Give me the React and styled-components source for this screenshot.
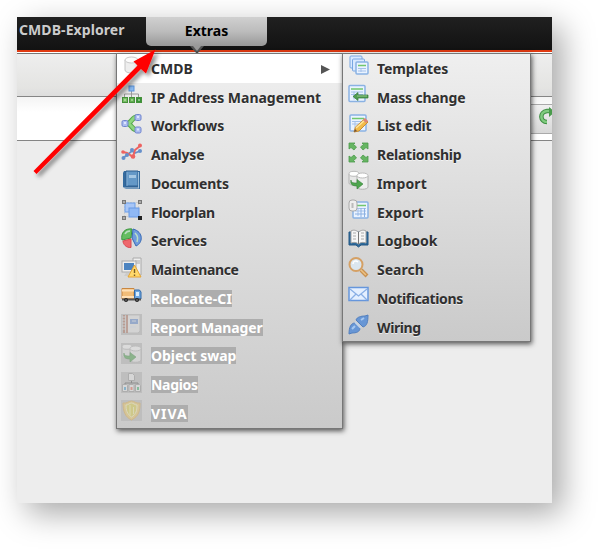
import React from "react";
import styled, { createGlobalStyle, css } from "styled-components";

const Global = createGlobalStyle`
  body { margin: 0; background: #fff; overflow: hidden; }
  * { box-sizing: border-box; }
`;

const Page = styled.div`
  width: 600px;
  height: 551px;
  padding: 17px;
  position: relative;
  font-family: "Noto Sans", "Open Sans", sans-serif;
  font-weight: 700;
  font-size: 14px;
  color: #303030;
`;

const AppFrame = styled.div`
  width: 535px;
  height: 486px;
  background: #ededed;
  box-shadow: 10px 10px 30px rgba(0, 0, 0, 0.35);
  display: flex;
  flex-direction: column;
`;

const NavBar = styled.nav`
  height: 35px;
  flex: none;
  display: flex;
  background: linear-gradient(#202020, #121212);
  border-bottom: 2px solid #e03a12;
`;

const NavItem = styled.div`
  width: 129px;
  padding-left: 2px;
  line-height: 26px;
  letter-spacing: 0.08px;
  color: #ccc;
`;

const ActiveTab = styled.div`
  position: relative;
  width: 121px;
  height: 29px;
  border-radius: 0 0 5px 5px;
  background: linear-gradient(#d0d0d0, #bcbcbc 50%, #989898);
  color: #000;
  text-align: center;
  line-height: 28px;
`;

const TabPointer = styled.svg`
  position: absolute;
  left: 44px;
  top: 29px;
  width: 14px;
  height: 8px;
`;

const ToolBar = styled.div`
  height: 44px;
  flex: none;
  margin-top: 1px;
  border-top: 1px solid #777;
  border-bottom: 1px solid #858585;
  background: linear-gradient(#eee, #e4e4e2 80%, #ddd);
  box-shadow: 0 -1px 0 #fff;
`;

const FilterBar = styled.div`
  height: 44px;
  flex: none;
  display: flex;
  justify-content: flex-end;
  padding: 7px 0 6px;
  border-bottom: 1px solid #858585;
  background: linear-gradient(#f4f4f4, #fff 35%);
`;

const RefreshBox = styled.div`
  width: 25px;
  padding: 2px 0 0 12px;
  overflow: hidden;
  border-top: 1px solid #aaa;
  border-bottom: 1px solid #aaa;
  background: linear-gradient(#f0f0f0, #d8d8d8);
`;

const Menu = styled.ul`
  position: absolute;
  top: 53px;
  left: ${(p) => (p.$sub ? 342 : 116)}px;
  width: ${(p) => (p.$sub ? 189 : 227)}px;
  height: ${(p) => (p.$sub ? 289 : 376)}px;
  margin: 0;
  padding: 0;
  list-style: none;
  border: 1px solid #777;
  background: linear-gradient(#efefef, #cacaca);
  box-shadow: 1px 2px 5px rgba(0, 0, 0, 0.65);
`;

const MenuRow = styled.li`
  height: 28.75px;
  display: flex;
  align-items: center;
  padding-left: ${(p) => (p.$sub ? 5 : 4)}px;
  background: ${(p) => (p.$selected ? "#fff" : "transparent")};
`;

const IconCell = styled.span`
  width: 21px;
  height: 21px;
  flex: none;
  margin: 0 ${(p) => (p.$sub ? 8 : 9)}px 5px 0;
  ${(p) =>
    p.$faded &&
    css`
      background: #bebebe;
    `}
  svg {
    display: block;
    width: 21px;
    height: 21px;
    opacity: ${(p) => (p.$faded ? 0.45 : 1)};
  }
`;

const Label = styled.span`
  height: 17px;
  line-height: 17px;
  white-space: nowrap;
  letter-spacing: ${(p) => p.$track}px;
  text-shadow: 0 1px 0 rgba(255, 255, 255, 0.65);
  ${(p) =>
    p.$disabled &&
    css`
      color: #fff;
      background: #adadad;
      text-shadow: none;
    `}
`;

const SubmenuArrow = styled.svg`
  width: 9px;
  height: 9px;
  margin: 3px 12px 0 auto;
`;

const Pointer = styled.svg`
  position: absolute;
  left: 25px;
  top: 40px;
  width: 145px;
  height: 145px;
`;

const drum = (
  <>
    <path d="M4 5v10c0 4 13 4 13 0V5" fill="#eee" stroke="#c4c4c4" />
    <ellipse cx="10.5" cy="5" rx="6.5" ry="3" fill="#fcfcfc" stroke="#cacaca" />
  </>
);

const sheet = (x, y, w, h) => (
  <>
    <rect x={x} y={y} width={w} height={h} rx="1" fill="#eaf3ff" stroke="#8bb2e3" strokeWidth="1.5" />
    <path d={`M${x + 2} ${y + 3.5}h${w - 4}`} stroke="#72c76c" strokeWidth="1.5" />
    <path
      d={`M${x + 2} ${y + 6.5}h${w - 4}M${x + 2} ${y + 9}h${w - 4}M${x + 5} ${y + 6}v${h - 8}`}
      stroke="#a4c1ea"
    />
  </>
);

const drums = (
  <>
    <path d="M1 4v9c0 3 10 3 10 0V4" fill="#e8e8e8" stroke="#b2b2b2" />
    <ellipse cx="6" cy="3.8" rx="5" ry="2.5" fill="#fff" stroke="#bbb" />
    <path d="M9 6v11c0 3 11 3 11 0V6" fill="#eee" stroke="#b2b2b2" />
    <ellipse cx="14.5" cy="5.5" rx="5.5" ry="2.5" fill="#fff" stroke="#bbb" />
    <path d="M3 10c0 3 3 3 6 3V9.500l6 4.500-6 5V16c-5 0-7-2-6-6z" fill="#4fa64f" stroke="#377f3a" strokeWidth=".6" />
  </>
);

const icons = {
  cmdb: drum,
  network: (
    <>
      <path d="M10.5 6v4M3.5 13v-3h14v3M10.5 10v3" fill="none" stroke="#999" />
      <rect x="8" y="2" width="5" height="5" fill="#8cbcf3" stroke="#5b93db" />
      <g stroke="#46913b">
        <rect x="1.5" y="13.5" width="5" height="5" fill="#77bd64" />
        <rect x="8.5" y="13.5" width="5" height="5" fill="#60ad50" />
        <rect x="15.5" y="13.5" width="5" height="5" fill="#389238" />
      </g>
      <path d="M3 16h2M10 16h2M17 16h2" stroke="#d3f2c5" />
    </>
  ),
  workflow: (
    <>
      <path d="M16 4C11 4 12 8 7 10.5 12 13 11 17 16 17" fill="none" stroke="#59a84f" strokeWidth="5" />
      <path d="M16 4C11 4 12 8 7 10.5 12 13 11 17 16 17" fill="none" stroke="#8dd77e" strokeWidth="3" />
      <g fill="#aebef0" stroke="#6f84cf">
        <rect x="1" y="7.5" width="6" height="6" rx="1.5" />
        <rect x="14" y="1.5" width="6" height="6" rx="1.5" />
        <rect x="14" y="14" width="6" height="6" rx="1.5" />
      </g>
      <path d="M3 10h2M16 4h2M16 16.5h2" stroke="#dce5ff" strokeWidth="2" />
    </>
  ),
  analyse: (
    <>
      <path d="M2 16 6 13l5-4 3 2 5-2" fill="none" stroke="#668fca" strokeWidth="1.7" />
      <path d="M2 10l4 1 6 4 2-7 5-4" fill="none" stroke="#ed6260" strokeWidth="2" />
      <g fill="#668fca">
        <circle cx="2.5" cy="16" r="2" />
        <circle cx="6" cy="13" r="2" />
        <circle cx="11" cy="8" r="2" />
        <circle cx="19" cy="9" r="2" />
      </g>
      <g fill="#ed6260">
        <circle cx="2" cy="10" r="1.8" />
        <circle cx="12" cy="14.5" r="2.3" />
        <circle cx="19" cy="3.5" r="2" />
      </g>
    </>
  ),
  book: (
    <>
      <path d="M3 1h16v18H5l-3-2V3z" fill="#356b9e" />
      <path d="M5 1h12v15H5z" fill="#6498c7" stroke="#2c5e90" />
      <path d="M17.5 2v16" stroke="#9fc1dc" />
      <path d="M8 5h7v3H8z" fill="#a5c7e3" />
      <path d="M6 2v14" stroke="#81add2" />
      <path d="M3 18h15" stroke="#b4c7d8" />
    </>
  ),
  floor: (
    <>
      <path d="M3.5 3.5h14v14h-14z" fill="none" stroke="#bbb" strokeDasharray="1 2" />
      <rect x="4" y="4" width="10" height="9" fill="#a8c6f6" stroke="#6b9ee9" />
      <rect x="8" y="9" width="10" height="9" fill="#8fb8f5" stroke="#6698e4" />
      <path d="M1 1h4v4H1zM17 1h4v4h-4zM1 17h4v4H1z" fill="#777" />
      <path d="M17 17h4v4h-4z" fill="#222" />
      <path d="M2 2h2v2H2zM18 2h2v2h-2zM2 18h2v2H2z" fill="#aaa" />
    </>
  ),
  pie: (
    <>
      <path d="M10 10 1 12C-.5 5 4 0 11 1z" fill="#65bd61" stroke="#3c963f" />
      <path d="M12 1c11 3 10 14 3 17l-4-8z" fill="#6f9bdd" stroke="#3669b4" />
      <path d="M10 11v8.5C5 20 2 16 2 13z" fill="#ee686d" stroke="#d94951" />
      <path d="M4 6c1-2 3-3 5-3M14 5c3 3 3 5 2 9" stroke="#bbdfc4" fill="none" strokeWidth="1.5" />
    </>
  ),
  maintenance: (
    <>
      <path d="M12 1h8v17h-8z" fill="#eee" stroke="#aaa" />
      <path d="M14 4h5M14 6h5" stroke="#aaa" />
      <rect x="1" y="4" width="14" height="11" fill="#eee" stroke="#aaa" />
      <path d="M3 6h10v7H3z" fill="#4d84c0" />
      <path d="M5 16h8l1 3H3z" fill="#ccc" />
      <path d="m13.5 8 6.5 12H7z" fill="#ffd86b" stroke="#e6a435" />
      <path d="M13.5 12v4M13.5 17.5V19" stroke="#795d26" strokeWidth="1.4" />
    </>
  ),
  truck: (
    <>
      <path d="M1 3.5h12V14H1z" fill="#f1bd79" stroke="#c88640" />
      <path d="M1 5.5h12M1 12h12" stroke="#ffe0b5" strokeWidth="2" />
      <path d="M13.5 5h5l1.5 2v7h-6.5z" fill="#6da6e1" stroke="#326ba9" />
      <path d="M15 7h3v4h-3z" fill="#d8edff" />
      <path d="M1 14.5h19" stroke="#555" strokeWidth="2" />
      <circle cx="5" cy="15" r="2" fill="#222" />
      <circle cx="16" cy="15" r="2" fill="#222" />
      <path d="M4.5 15h1M15.5 15h1" stroke="#ddd" />
    </>
  ),
  report: (
    <>
      <path d="M4 1h15v16l-2 2H4z" fill="#eee" stroke="#bbb" />
      <path d="M3 1v18M6 1v18" stroke="#a95c42" strokeWidth="1.5" />
      <path d="M9 5h8v5H9z" fill="#6690d8" />
      <path d="M9 13h6M11 7h4" stroke="#d9e3f4" />
      <path d="M1 3h4M1 6h4M1 9h4M1 12h4M1 15h4" stroke="#ddd" />
    </>
  ),
  drums,
  nagios: (
    <>
      <path d="M10.5 8v3M4 14v-3h13v3" fill="none" stroke="#555" />
      <g fill="#f5f5f5" stroke="#999">
        <path d="M7.5 1.5h4l2 2v5h-6zM1.5 12.5h4l1 1v6h-5zM8 12.5h4l1 1v6H8zM14.5 12.5h4l1 1v6h-5z" />
      </g>
      <path d="M4 15v3" stroke="#48a7da" strokeWidth="2" />
      <path d="M10.5 15v3" stroke="#ef6d58" strokeWidth="2" />
      <path d="M17 15v3" stroke="#42b873" strokeWidth="2" />
    </>
  ),
  shield: (
    <>
      <path d="M2 3c3 1 6-2 8.500-2S16 4 19 3c0 8-1 13-8.500 17C4 17 2 11 2 3z" fill="#f3ce67" stroke="#dfae4d" />
      <path d="M5 5c2 0 4-2 5.500-2S14 5 16 5c0 6-1 9-5.500 12C6 14 5 10 5 5z" fill="#e2d54b" stroke="#fff8bd" />
      <path d="M9 5v10M12.500 7v7" stroke="#fbf7a8" />
    </>
  ),
  templates: (
    <>
      <rect x="2" y="1" width="12" height="12" rx="1" fill="#d9e9ff" stroke="#78a6e1" />
      <rect x="4.5" y="4" width="12" height="12" rx="1" fill="#d9e9ff" stroke="#78a6e1" />
      {sheet(8, 7, 12, 12)}
    </>
  ),
  mass: (
    <>
      {sheet(1, 1.5, 16, 16)}
      <path d="m5 12.5 5-4v2.500h10v3H10v2.500z" fill="#4f9e50" stroke="#34783a" strokeWidth=".7" />
      <path d="M9 12h10" stroke="#94c38c" />
    </>
  ),
  edit: (
    <>
      {sheet(2, 2, 16, 16)}
      <path d="m6 19 1.5-5 9-8 3.500 3-9 9z" fill="#f2bb49" stroke="#c98d35" />
      <path d="m8 15 9-8" stroke="#ffe69a" strokeWidth="1.5" />
      <path d="m16 6 3 3" stroke="#dc8577" strokeWidth="3" />
      <path d="m6 19 1-3 2 2z" fill="#6e513b" />
    </>
  ),
  relation: (
    <g fill="#66b562" stroke="#4b9b4b" strokeWidth=".8">
      <path d="M1 1h6L5.500 2.500 8.500 5 6 8 3 5.500 1 7z" />
      <path d="M20 1h-6l1.500 1.500-3 2.500L15 8l3-2.500L20 7z" />
      <path d="M1 20h6l-1.500-1.500 3-2.500L6 13l-3 2.500L1 14z" />
      <path d="M20 20h-6l1.500-1.500-3-2.500L15 13l3 2.500L20 14z" />
    </g>
  ),
  exporting: (
    <>
      {sheet(5, 3, 15, 16)}
      <rect x="1" y="1" width="8" height="11" rx="3" fill="#eee" stroke="#aaa" />
      <path d="M4.500 4v5" stroke="#bbb" strokeWidth="2" />
      <path d="M13 9v9M16.500 9v9M7 15h11" stroke="#8cb1e2" />
    </>
  ),
  logbook: (
    <>
      <path d="M1 4h19v13h-7l-2.500 2L8 17H1z" fill="#2e6a9b" stroke="#235683" />
      <path d="M3 3c3-2 6 0 7.500 1v12C8 14 6 14 3 15zM18 3c-3-2-6 0-7.500 1v12c2.500-2 4.500-2 7.500-1z" fill="#f6f6f6" stroke="#a4a4a4" />
      <path d="M5 5h3M5 8h3M5 11h3M13 5h3M13 8h3M13 11h3" stroke="#aaa" />
      <path d="M10.500 4v12" stroke="#777" />
    </>
  ),
  search: (
    <>
      <path d="m13 13 6 6" stroke="#c99252" strokeWidth="4" />
      <path d="m13 13 5 5" stroke="#edc284" strokeWidth="1.5" />
      <circle cx="8" cy="7.500" r="6.500" fill="#dbe6ef" stroke="#d5a064" strokeWidth="2" />
      <path d="M5 7c0-3 3-4 5-2" fill="none" stroke="#fff" strokeWidth="1.5" />
    </>
  ),
  mail: (
    <>
      <rect x="1" y="2.500" width="19" height="13" fill="#e4efff" stroke="#6696dc" strokeWidth="1.500" />
      <path d="m2 4 8.500 7L19 4M2 15l6-6M19 15l-6-6" fill="none" stroke="#89afe5" strokeWidth="1.300" />
    </>
  ),
  wiring: (
    <>
      <path d="M1 20c0-7 2-11 6-11l5 5c0 4-4 5-8 5z" fill="#6796d5" stroke="#527fbe" />
      <path d="M20 1c0 7-1 11-5 12L8 6c1-3 5-4 9-4z" fill="#6796d5" stroke="#527fbe" />
      <path d="m7 8 6 6" stroke="#c4d4e7" strokeWidth="2" />
      <path d="m4 15 3-3M13 6l3-2" stroke="#a7c8f0" strokeWidth="2" />
    </>
  ),
};

const mainItems = [
  { icon: "cmdb", text: "CMDB", selected: true, track: 0 },
  { icon: "network", text: "IP Address Management", track: -0.03 },
  { icon: "workflow", text: "Workflows", track: -0.1 },
  { icon: "analyse", text: "Analyse", track: -0.2 },
  { icon: "book", text: "Documents", track: -0.2 },
  { icon: "floor", text: "Floorplan", track: -0.25 },
  { icon: "pie", text: "Services", track: -0.15 },
  { icon: "maintenance", text: "Maintenance", track: -0.35 },
  { icon: "truck", text: "Relocate-CI", disabled: true, track: 0.15 },
  { icon: "report", text: "Report Manager", disabled: true, faded: true, track: -0.15 },
  { icon: "drums", text: "Object swap", disabled: true, faded: true, track: -0.03 },
  { icon: "nagios", text: "Nagios", disabled: true, faded: true, track: -0.3 },
  { icon: "shield", text: "VIVA", disabled: true, faded: true, track: 1 },
];

const subItems = [
  { icon: "templates", text: "Templates", track: -0.1 },
  { icon: "mass", text: "Mass change", track: -0.18 },
  { icon: "edit", text: "List edit", track: -0.2 },
  { icon: "relation", text: "Relationship", track: -0.25 },
  { icon: "drums", text: "Import", track: 0.15 },
  { icon: "exporting", text: "Export", track: 0.15 },
  { icon: "logbook", text: "Logbook", track: 0 },
  { icon: "search", text: "Search", track: 0 },
  { icon: "mail", text: "Notifications", track: -0.38 },
  { icon: "wiring", text: "Wiring", track: -0.4 },
];

function MenuList({ items, sub }) {
  return (
    <Menu $sub={sub}>
      {items.map((item) => (
        <MenuRow key={item.text} $sub={sub} $selected={item.selected}>
          <IconCell $sub={sub} $faded={item.faded}>
            <svg viewBox="0 0 21 21" fill="none">{icons[item.icon]}</svg>
          </IconCell>
          <Label $disabled={item.disabled} $track={item.track}>{item.text}</Label>
          {item.selected && (
            <SubmenuArrow viewBox="0 0 9 9">
              <path d="M0 0v9l9-4.500z" fill="#555" />
            </SubmenuArrow>
          )}
        </MenuRow>
      ))}
    </Menu>
  );
}

export default function App() {
  return (
    <Page>
      <Global />
      <AppFrame>
        <NavBar>
          <NavItem>CMDB-Explorer</NavItem>
          <ActiveTab>
            Extras
            <TabPointer viewBox="0 0 14 8">
              <path d="M0 0h14L7 8z" fill="#555" />
              <path d="M3 0h8L7 5z" fill="#999" />
            </TabPointer>
          </ActiveTab>
        </NavBar>
        <ToolBar />
        <FilterBar>
          <RefreshBox>
            <svg width="20" height="20" viewBox="0 0 20 20" fill="none">
              <path d="M8 15C1 15 0 5 8 4h4" stroke="#3f8e43" strokeWidth="4.500" />
              <path d="M8 15C1 15 0 5 8 4h4" stroke="#7fcb7e" strokeWidth="2.500" />
              <path d="m10 0 6 5-6 5z" fill="#4a9c4c" />
            </svg>
          </RefreshBox>
        </FilterBar>
      </AppFrame>
      <MenuList items={mainItems} />
      <MenuList items={subItems} sub />
      <Pointer viewBox="0 0 145 145">
        <defs>
          <filter id="pointerShadow" x="-20%" y="-20%" width="140%" height="140%">
            <feDropShadow dx="3" dy="3" stdDeviation="2" floodColor="#000" floodOpacity="0.45" />
          </filter>
        </defs>
        <path
          d="M8.500 131 112.500 25.500l-4-4L130.500 9.500 121 33.500l-5-4.500L11.500 134z"
          fill="#f00"
          filter="url(#pointerShadow)"
        />
      </Pointer>
    </Page>
  );
}
